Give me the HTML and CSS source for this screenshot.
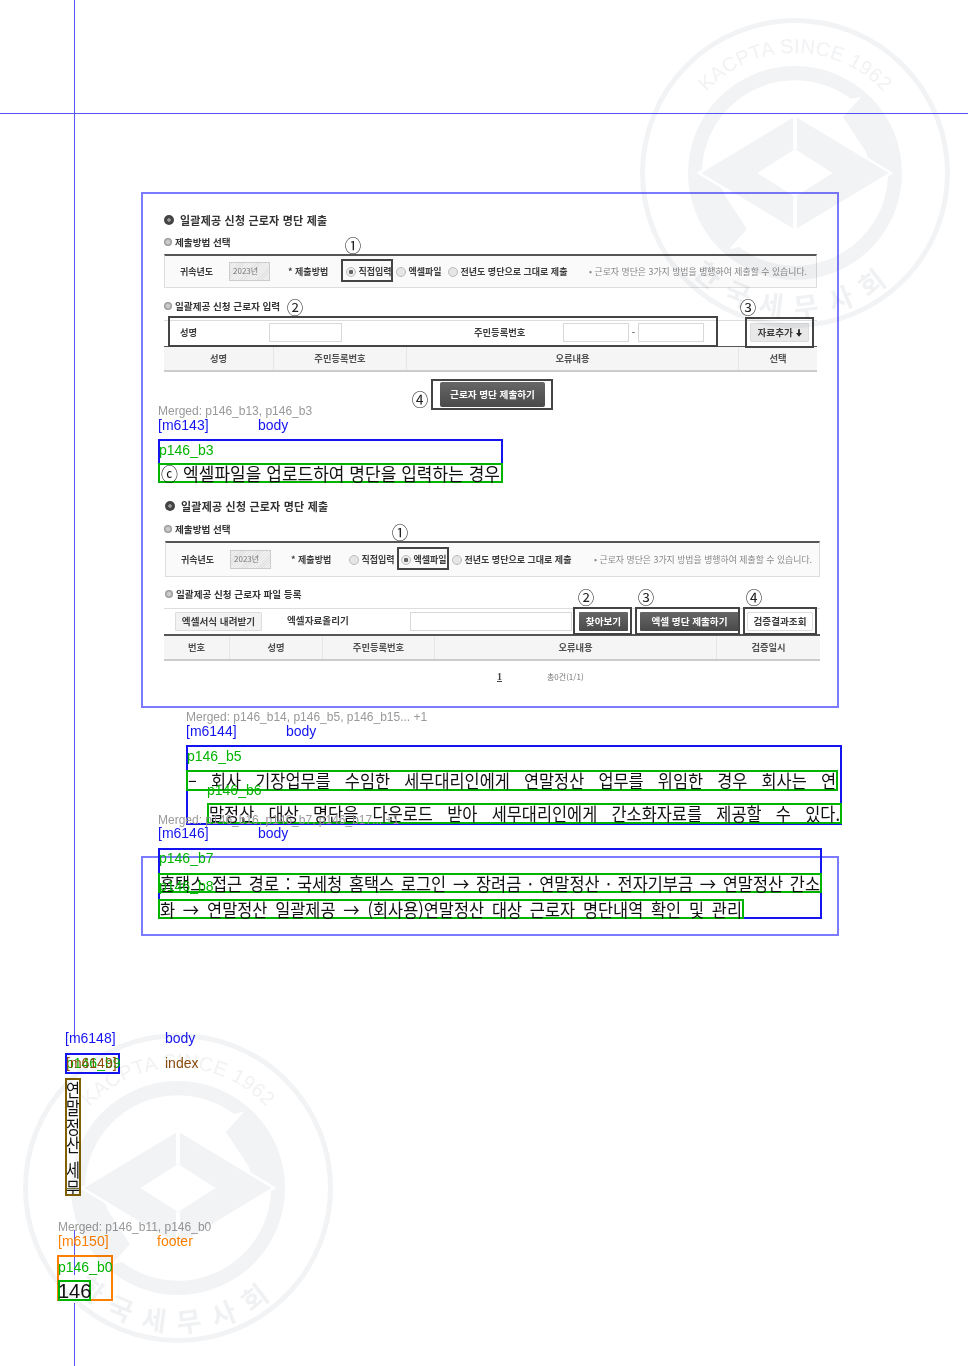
FILE: index.html
```html
<!DOCTYPE html>
<html lang="ko">
<head>
<meta charset="utf-8">
<title>p146</title>
<link rel="stylesheet" href="styles.css">
</head>
<body>
<main class="page">

  <section class="shot shot-a">
    <h2 class="shot-title"><i class="dot-lg"></i>일괄제공 신청 근로자 명단 제출</h2>
    <h3 class="shot-sub sub-a1"><i class="dot-sm"></i>제출방법 선택</h3>
    <div class="method method-a">
      <span>귀속년도</span>
      <span><b class="year">2023년</b></span>
      <span>* 제출방법</span>
      <span class="radio on">직접입력</span>
      <span class="radio">엑셀파일</span>
      <span class="radio">전년도 명단으로 그대로 제출</span>
      <span class="note">• 근로자 명단은 3가지 방법을 병행하여 제출할 수 있습니다.</span>
    </div>
    <h3 class="shot-sub sub-a2"><i class="dot-sm"></i>일괄제공 신청 근로자 입력</h3>
    <div class="entry entry-a">
      <span>성명</span>
      <b class="field field-name"></b>
      <span>주민등록번호</span>
      <span class="rrn"><b class="field"></b><em>-</em><b class="field"></b></span>
      <button class="btn-light btn-add">자료추가 <svg class="arrow" viewBox="0 0 8 10"><path d="M2.8 0h2.4v5H8L4 10 0 5h2.8z"/></svg></button>
    </div>
    <div class="thead thead-a">
      <span>성명</span><span>주민등록번호</span><span>오류내용</span><span>선택</span>
    </div>
    <button class="btn-dark btn-submit">근로자 명단 제출하기</button>
  </section>

  <section class="shot shot-b">
    <h2 class="shot-title title-b"><i class="dot-lg"></i>일괄제공 신청 근로자 명단 제출</h2>
    <h3 class="shot-sub sub-b1"><i class="dot-sm"></i>제출방법 선택</h3>
    <div class="method method-b">
      <span>귀속년도</span>
      <span><b class="year">2023년</b></span>
      <span>* 제출방법</span>
      <span class="radio">직접입력</span>
      <span class="radio on">엑셀파일</span>
      <span class="radio">전년도 명단으로 그대로 제출</span>
      <span class="note">• 근로자 명단은 3가지 방법을 병행하여 제출할 수 있습니다.</span>
    </div>
    <h3 class="shot-sub sub-b2"><i class="dot-sm"></i>일괄제공 신청 근로자 파일 등록</h3>
    <div class="entry entry-b">
      <button class="btn-light btn-form">엑셀서식 내려받기</button>
      <span class="upload-label">엑셀자료올리기</span>
      <b class="field field-file"></b>
      <button class="btn-dark btn-find">찾아보기</button>
      <button class="btn-dark btn-excel">엑셀 명단 제출하기</button>
      <button class="btn-light btn-check">검증결과조회</button>
    </div>
    <div class="thead thead-b">
      <span>번호</span><span>성명</span><span>주민등록번호</span><span>오류내용</span><span>검증일시</span>
    </div>
    <div class="pager"><u>1</u><span>총0건(1/1)</span></div>
  </section>

  <i class="mark m-a1"></i><i class="mark m-a2"></i><i class="mark m-a3"></i><i class="mark m-a4"></i>
  <i class="mark m-b1"></i><i class="mark m-b2"></i><i class="mark m-b3"></i><i class="mark m-b4"></i>
  <span class="num n-a1">①</span><span class="num n-a2">②</span><span class="num n-a3">③</span><span class="num n-a4">④</span>
  <span class="num n-b1">①</span><span class="num n-b2">②</span><span class="num n-b3">③</span><span class="num n-b4">④</span>

  <i class="axis axis-h"></i>
  <i class="axis axis-v1"></i><i class="axis axis-v2"></i><i class="axis axis-v3"></i>

  <i class="frame frame-1"></i>
  <i class="frame frame-2"></i>

  <span class="lb merged mg1">Merged: p146_b13, p146_b3</span>
  <span class="lb body-c l-m6143">[m6143]</span><span class="lb body-c l-b6143">body</span>
  <div class="box blue b1"></div>
  <span class="lb green-c l-b3">p146_b3</span>
  <div class="line l1"><span>ⓒ 엑셀파일을 업로드하여 명단을 입력하는 경우</span></div>

  <span class="lb merged mg2">Merged: p146_b14, p146_b5, p146_b15... +1</span>
  <span class="lb body-c l-m6144">[m6144]</span><span class="lb body-c l-b6144">body</span>
  <div class="box blue b2"></div>
  <span class="lb green-c l-b5">p146_b5</span>
  <div class="line l2"><span>– 회사 기장업무를 수임한 세무대리인에게 연말정산 업무를 위임한 경우 회사는 연</span></div>
  <span class="lb green-c l-b6">p146_b6</span>
  <div class="line l3"><span>말정산 대상 명단을 다운로드 받아 세무대리인에게 간소화자료를 제공할 수 있다.</span></div>

  <span class="lb merged mg3">Merged: p146_b16, p146_b7, p146_b17... +1</span>
  <span class="lb body-c l-m6146">[m6146]</span><span class="lb body-c l-b6146">body</span>
  <div class="box blue b3"></div>
  <span class="lb green-c l-b7">p146_b7</span>
  <div class="line l4"><span>홈택스 접근 경로 : 국세청 홈택스 로그인 → 장려금 · 연말정산 · 전자기부금 → 연말정산 간소</span></div>
  <span class="lb green-c l-b8">p146_b8</span>
  <div class="line l5"><span>화 → 연말정산 일괄제공 → (회사용)연말정산 대상 근로자 명단내역 확인 및 관리</span></div>

  <span class="lb body-c l-m6148">[m6148]</span><span class="lb body-c l-b6148">body</span>
  <div class="box blue b4"></div>
  <span class="lb green-c l-b9">p146_b9</span>
  <span class="lb index-c l-m6149">[m6149]</span><span class="lb index-c l-i6149">index</span>
  <div class="vtitle"><span>연말정산</span><span>세무</span></div>

  <span class="lb merged mg4">Merged: p146_b11, p146_b0</span>
  <span class="lb footer-c l-m6150">[m6150]</span><span class="lb footer-c l-f6150">footer</span>
  <div class="box orange b5"></div>
  <span class="lb green-c l-b0">p146_b0</span>
  <div class="pageno">146</div>

  <svg class="seal-defs" aria-hidden="true">
    <symbol id="seal" viewBox="-160 -160 320 320">
      <circle r="152.5" class="seal-ring"/>
      <circle r="107" class="seal-fill"/>
      <path class="seal-cut" d="M66-76A101 101 0 0 0 56-74A93 93 0 0 0-93 0L-96 0 0-58 73-14 71-21 48-56Z"/>
      <path class="seal-cut" d="M-66 76A101 101 0 0 0-56 74A93 93 0 0 0 93 0L96 0 0 58-73 14-71 21-48 56Z"/>
      <path class="seal-line" d="M-96 0 0-58 96 0 0 58Z"/>
      <path class="seal-gap" d="M0-58V-24M0 58V24"/>
      <path class="seal-cut" d="M-37.5 0 0-24 37.5 0 0 24Z"/>
      <path id="seal-top" class="seal-path" d="M-112.8-41A120 120 0 0 1 112.8-41"/>
      <path id="seal-bot" class="seal-path" d="M-142-24A144 144 0 1 0 142-24"/>
      <text class="seal-en"><textPath href="#seal-top" startOffset="50%">KACPTA SINCE 1962</textPath></text>
      <text class="seal-ko"><textPath href="#seal-bot" startOffset="50%">한국세무사회</textPath></text>
    </symbol>
  </svg>
  <svg class="seal seal-1" aria-hidden="true"><use href="#seal"/></svg>
  <svg class="seal seal-2" aria-hidden="true"><use href="#seal"/></svg>
</main>
</body>
</html>
```

FILE: styles.css
```css
* { box-sizing: border-box; }
html, body { margin: 0; padding: 0; background: #fff; }

.page {
  position: relative;
  width: 968px;
  height: 1366px;
  overflow: hidden;
  font-family: "Liberation Sans", "Noto Sans CJK KR", sans-serif;
  filter: blur(.25px);
}
.page i { font-style: normal; display: block; }

/* ---------- screenshot widgets ---------- */
.shot {
  position: absolute;
  left: 164px;
  font-family: "Noto Sans CJK KR", sans-serif;
  font-size: 9.3px;
  font-weight: 700;
  color: #3c3c3c;
  filter: blur(.4px);
}
.shot-a { top: 212px; width: 653px; }
.shot-b { top: 498px; width: 656px; }

.shot-title {
  display: flex;
  align-items: center;
  gap: 6px;
  height: 16px;
  margin: 0;
  font-size: 11px;
  line-height: 16px;
  letter-spacing: .2px;
  color: #333;
}
.title-b { padding-left: 1px; }
.dot-lg {
  width: 10px;
  height: 10px;
  border-radius: 50%;
  background: radial-gradient(circle, #999 0 1.5px, #444 2px);
}
.shot-sub {
  display: flex;
  align-items: center;
  gap: 3px;
  height: 16px;
  margin: 0;
  font-size: 9.6px;
  line-height: 16px;
  color: #333;
}
.dot-sm {
  width: 8px;
  height: 8px;
  border-radius: 50%;
  background: radial-gradient(circle, #ccc 0 1.5px, #999 3.5px);
}
.sub-a1 { margin-top: 6px; }
.sub-a2 { margin-top: 10px; }
.sub-b1 { margin-top: 7px; }
.sub-b2 { margin-top: 9px; padding-left: 1px; }

.method {
  display: grid;
  align-items: center;
  padding-left: 15px;
  font-size: 9px;
  background: #fafafa;
  border: 1px solid #ddd;
  border-top: 2px solid #555;
  white-space: nowrap;
}
.method-a {
  height: 34px;
  margin-top: 4px;
  grid-template-columns: 49px 59px 58px 50px 52px 141px 228px;
}
.method-b {
  height: 36px;
  margin-top: 4px;
  margin-left: 1px;
  grid-template-columns: 49px 61px 58px 52px 51px 142px 226px;
}
.year {
  display: block;
  width: 41px;
  height: 19px;
  padding-left: 3px;
  font-weight: 400;
  font-size: 8px;
  line-height: 16px;
  color: #777;
  border: 1px solid #ccc;
  background: repeating-linear-gradient(135deg, #f1f1f1 0 1px, #e2e2e2 1px 2px);
}
.radio {
  display: flex;
  align-items: center;
  gap: 2.5px;
}
.radio::before {
  content: "";
  flex: none;
  width: 8px;
  height: 8px;
  border-radius: 50%;
  background: #e6e6e6;
  border: 1px solid #bbb;
}
.radio.on::before {
  background: radial-gradient(circle, #666 0 2px, #eee 2.5px);
}
.note {
  font-weight: 400;
  font-size: 8.9px;
  color: #888;
}

.entry {
  display: flex;
  border-top: 1px solid #ddd;
  height: 26px;
  margin-top: 6px;
}
.entry-a { padding: 2px 0 0 16px; }
.entry-a > span { line-height: 18px; }
.entry-a > span:first-child { width: 89px; }
.entry-a > span:nth-child(3) { width: 89px; margin-left: 132px; }
.entry-b { padding: 3px 0 0 11px; }

.field {
  display: block;
  width: 66px;
  height: 19px;
  background: #fff;
  border: 1px solid #d8d8d8;
}
.field-name { width: 73px; }
.rrn { display: flex; }
.rrn em { width: 9px; text-align: center; font-style: normal; color: #777; line-height: 19px; }

.btn-light, .btn-dark {
  display: block;
  height: 19px;
  padding: 0 0 2px;
  font: inherit;
  font-size: 9.6px;
  text-align: center;
  border-radius: 1px;
}
.btn-light { color: #3c3c3c; background: #f2f2f2; border: 1px solid #ddd; }
.btn-dark {
  color: #fff;
  border: 0;
  background: linear-gradient(#666, #4a4a4a);
}
.btn-add { width: 59px; margin-left: 46px; background: #e8e8e8; }
.arrow { width: 6px; height: 8px; vertical-align: -1px; fill: #222; }
.btn-submit {
  width: 105px;
  height: 25px;
  margin: 10px 0 0 276px;
  border-radius: 2px;
}
.btn-form { width: 87px; }
.upload-label { width: 123px; margin-left: 25px; line-height: 16px; font-size: 9.6px; }
.field-file { width: 162px; }
.btn-find { width: 49px; margin-left: 7px; }
.btn-excel { width: 99px; margin-left: 12px; }
.btn-check { width: 66px; margin-left: 8px; background: #fff; }

.thead {
  display: grid;
  align-items: center;
  text-align: center;
  height: 26px;
  background: #f5f5f5;
  border-top: 1px solid #555;
  border-bottom: 2px solid #ccc;
  color: #505050;
}
.thead span { line-height: 23px; border-right: 1px solid #e6e6e6; }
.thead span:last-child { border-right: 0; }
.thead-a { grid-template-columns: 110px 133px 332px 78px; }
.thead-b { grid-template-columns: 66px 93px 112px 282px 103px; margin-top: 0; border-top-width: 2px; height: 27px; }

.pager {
  display: flex;
  align-items: center;
  height: 14px;
  margin-top: 8px;
  padding-left: 333px;
  font-weight: 400;
  color: #777;
}
.pager u {
  width: 50px;
  font: 700 10px "Liberation Serif", serif;
  color: #444;
}
.pager span { font-size: 8px; }

/* ---------- dark rectangles and numbers drawn on the screenshots ---------- */
.mark { position: absolute; border: 2px solid #444; filter: blur(.3px); }
.m-a1 { left: 341px; top: 259px; width: 52px; height: 23px; }
.m-a2 { left: 168px; top: 316px; width: 550px; height: 31px; }
.m-a3 { left: 745px; top: 317px; width: 69px; height: 31px; }
.m-a4 { left: 431px; top: 379px; width: 122px; height: 31px; }
.m-b1 { left: 397px; top: 547px; width: 52px; height: 23px; }
.m-b2 { left: 573px; top: 607px; width: 59px; height: 28px; }
.m-b3 { left: 635px; top: 607px; width: 105px; height: 28px; }
.m-b4 { left: 743px; top: 607px; width: 74px; height: 28px; }

.num {
  position: absolute;
  width: 20px;
  text-align: center;
  font: 400 16.5px/20px "Noto Sans CJK KR", sans-serif;
  color: #222;
}
.n-a1 { left: 343px; top: 235px; }
.n-a2 { left: 285px; top: 297px; }
.n-a3 { left: 738px; top: 297px; }
.n-a4 { left: 410px; top: 389px; }
.n-b1 { left: 390px; top: 522px; }
.n-b2 { left: 576px; top: 587px; }
.n-b3 { left: 636px; top: 587px; }
.n-b4 { left: 744px; top: 587px; }

/* ---------- guide lines ---------- */
.axis { position: absolute; background: #5555ff; }
.axis-h { left: 0; top: 113px; width: 968px; height: 1px; }
.axis-v1 { left: 74px; top: 0; width: 1px; height: 1038px; }
.axis-v2 { left: 74px; top: 1230px; width: 1px; height: 45px; }
.axis-v3 { left: 74px; top: 1303px; width: 1px; height: 63px; }

.frame { position: absolute; border: 2px solid #7b7bff; }
.frame-1 { left: 141px; top: 192px; width: 698px; height: 516px; }
.frame-2 { left: 141px; top: 856px; width: 698px; height: 80px; }

/* ---------- labels ---------- */
.lb {
  position: absolute;
  font-size: 14px;
  line-height: 14px;
  white-space: nowrap;
}
.merged { font-size: 12px; color: #999; }
.body-c { color: #1414f0; }
.green-c { color: #00b400; }
.index-c { color: #8b4c0c; }
.footer-c { color: #ff8000; }

.mg1 { left: 158px; top: 404px; }
.l-m6143 { left: 158px; top: 418px; }
.l-b6143 { left: 258px; top: 418px; }
.l-b3 { left: 159px; top: 443px; }
.mg2 { left: 186px; top: 710px; }
.l-m6144 { left: 186px; top: 724px; }
.l-b6144 { left: 286px; top: 724px; }
.l-b5 { left: 187px; top: 749px; }
.l-b6 { left: 207px; top: 783px; }
.mg3 { left: 158px; top: 813px; }
.l-m6146 { left: 158px; top: 826px; }
.l-b6146 { left: 258px; top: 826px; }
.l-b7 { left: 159px; top: 851px; }
.l-b8 { left: 159px; top: 879px; }
.l-m6148 { left: 65px; top: 1031px; }
.l-b6148 { left: 165px; top: 1031px; }
.l-b9 { left: 66px; top: 1056px; }
.l-m6149 { left: 66px; top: 1056px; }
.l-i6149 { left: 165px; top: 1056px; }
.mg4 { left: 58px; top: 1220px; }
.l-m6150 { left: 58px; top: 1234px; }
.l-f6150 { left: 157px; top: 1234px; }
.l-b0 { left: 58px; top: 1260px; }

.box { position: absolute; border: 2px solid; }
.blue { border-color: #1414f0; }
.orange { border-color: #ff8000; }
.b1 { left: 158px; top: 439px; width: 345px; height: 44px; }
.b2 { left: 186px; top: 745px; width: 656px; height: 80px; }
.b3 { left: 158px; top: 848px; width: 664px; height: 71px; }
.b4 { left: 65px; top: 1053px; width: 55px; height: 21px; }
.b5 { left: 57px; top: 1255px; width: 56px; height: 46px; }

.line {
  position: absolute;
  border: 2px solid #00b400;
  font-family: "Noto Sans CJK KR", sans-serif;
  font-size: 16.4px;
  font-weight: 400;
  line-height: 16px;
  color: #111;
}
.line span {
  display: block;
  text-align: justify;
  text-align-last: justify;
  transform: scaleY(1.08);
  transform-origin: 50% 50%;
}
.l1 { left: 158px; top: 463px; width: 345px; height: 20px; padding: 0 1px; font-size: 17px; }
.l2 { left: 186px; top: 770px; width: 652px; height: 21px; }
.l3 { left: 207px; top: 803px; width: 635px; height: 21px; }
.l4 { left: 158px; top: 873px; width: 664px; height: 20px; }
.l5 { left: 158px; top: 899px; width: 586px; height: 20px; }

.vtitle {
  position: absolute;
  left: 65px;
  top: 1078px;
  width: 16px;
  height: 118px;
  overflow: hidden;
  border: 2px solid #806000;
  font-family: "Noto Sans CJK KR", sans-serif;
  font-size: 18.5px;
  line-height: 18.3px;
  color: #111;
}
.vtitle::after {
  content: "";
  position: absolute;
  left: 0;
  right: 0;
  top: 108px;
  height: 1px;
  background: #7a7a40;
}
.vtitle span {
  display: block;
  width: 12px;
  margin-left: -1px;
  word-break: break-all;
  transform: scaleX(.82);
  transform-origin: 0 0;
}
.vtitle span + span { margin-top: 7px; }

.pageno {
  position: absolute;
  left: 58px;
  top: 1280px;
  width: 33px;
  height: 21px;
  border: 2px solid #00b400;
  font-size: 20px;
  line-height: 19px;
  text-indent: -2px;
  color: #111;
}

/* ---------- watermark seal ---------- */
.seal-defs { position: absolute; width: 0; height: 0; }
.seal {
  position: absolute;
  width: 320px;
  height: 320px;
  mix-blend-mode: multiply;
}
.seal-1 { left: 635px; top: 13px; }
.seal-2 { left: 18px; top: 1028px; }
.seal-ring { fill: none; stroke: #f2f3f5; stroke-width: 5; }
.seal-fill { fill: #f2f3f5; }
.seal-cut { fill: #fff; }
.seal-line { fill: none; stroke: #fff; stroke-width: 2.5; }
.seal-gap { fill: none; stroke: #fff; stroke-width: 4; }
.seal-path { fill: none; }
.seal-en {
  fill: #f1f2f4;
  font-family: "Liberation Sans", sans-serif;
  font-size: 20px;
  letter-spacing: .3px;
  text-anchor: middle;
}
.seal-ko {
  fill: #f0f1f3;
  font-family: "Noto Sans CJK KR", sans-serif;
  font-size: 27px;
  font-weight: 700;
  letter-spacing: 13px;
  text-anchor: middle;
}
```
